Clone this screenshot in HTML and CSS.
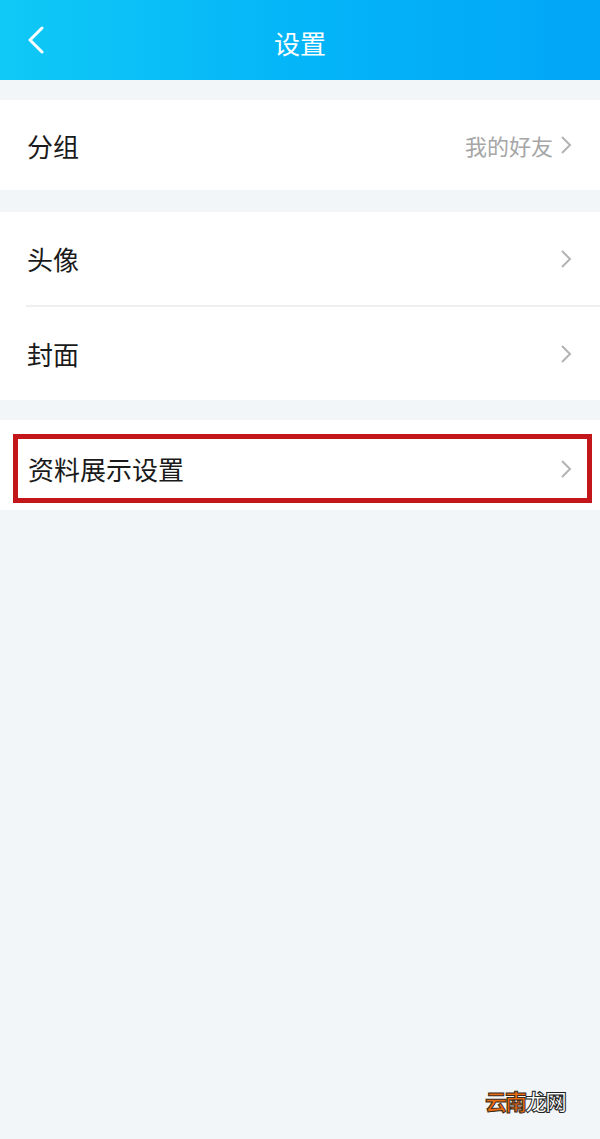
FILE: index.html
```html
<!DOCTYPE html>
<html lang="zh-CN">
<head>
    <meta charset="UTF-8">
    <meta name="viewport" content="width=device-width, initial-scale=1.0">
    <title>设置</title>
    <link rel="stylesheet" href="styles.css">
</head>
<body>
    <!-- 顶部导航 -->
    <header class="nav-bar">
        <span class="nav-back">
            <svg width="18" height="28" viewBox="0 0 18 28">
                <polyline points="15,2 3,14 15,26" fill="none" stroke="#fff" stroke-width="3" stroke-linecap="round" stroke-linejoin="round"/>
            </svg>
        </span>
        <h1 class="nav-title">设置</h1>
    </header>

    <!-- 分组 -->
    <section class="group group-first">
        <div class="row">
            <span class="row-label">分组</span>
            <span class="row-value">我的好友</span>
            <span class="row-arrow"><svg width="12" height="18" viewBox="0 0 12 18"><polyline points="2,1 10,9 2,17" fill="none" stroke="#b3b3b3" stroke-width="2"/></svg></span>
        </div>
    </section>

    <!-- 头像 / 封面 -->
    <section class="group">
        <div class="row row-tall">
            <span class="row-label">头像</span>
            <span class="row-arrow"><svg width="12" height="18" viewBox="0 0 12 18"><polyline points="2,1 10,9 2,17" fill="none" stroke="#b3b3b3" stroke-width="2"/></svg></span>
        </div>
        <div class="divider"></div>
        <div class="row row-tall">
            <span class="row-label">封面</span>
            <span class="row-arrow"><svg width="12" height="18" viewBox="0 0 12 18"><polyline points="2,1 10,9 2,17" fill="none" stroke="#b3b3b3" stroke-width="2"/></svg></span>
        </div>
    </section>

    <!-- 资料展示设置（红框标注） -->
    <section class="group group-marked">
        <div class="highlight">
            <span class="row-label">资料展示设置</span>
            <span class="row-arrow"><svg width="12" height="18" viewBox="0 0 12 18"><polyline points="2,1 10,9 2,17" fill="none" stroke="#b3b3b3" stroke-width="2"/></svg></span>
        </div>
    </section>

    <div class="watermark"><span class="wm-orange">云南</span><span class="wm-white">龙网</span></div>
</body>
</html>
```

FILE: styles.css
```css
/* 全局 */
body {
    margin: 0;
    padding: 0;
    height: 1139px;
    background-color: #f3f6f8;
    font-family: "Noto Sans CJK SC", "Noto Sans", sans-serif;
    position: relative;
    overflow: hidden;
}

/* 顶部导航 */
.nav-bar {
    height: 80px;
    background: linear-gradient(90deg, #10c9f6 0%, #04b5f8 50%, #02a6f7 100%);
    display: flex;
    align-items: center;
    justify-content: center;
    position: relative;
}

.nav-back {
    position: absolute;
    left: 27px;
    top: 26px;
    display: flex;
}

.nav-title {
    margin: 0;
    margin-top: 4px;
    font-size: 26px;
    font-weight: normal;
    color: #fff;
}

/* 分组列表 */
.group {
    background-color: #fff;
    margin-top: 22px;
}

.group-first {
    margin-top: 20px;
}

.row {
    height: 90px;
    display: flex;
    align-items: center;
    padding: 0 28px 0 27px;
}

.row-tall {
    height: 93px;
}

.row-label {
    flex: 1;
    font-size: 26px;
    color: #1a1a1a;
}

.row-value {
    font-size: 22px;
    color: #a6a6a6;
    margin-right: 7px;
}

.row-arrow {
    display: flex;
}

.divider {
    height: 2px;
    margin-left: 26px;
    background-color: #eeeff1;
}

/* 红框标注 */
.group-marked {
    margin-top: 20px;
    padding: 14px 8px 7px 13px;
}

.highlight {
    height: 59px;
    border: 5px solid #c2161a;
    display: flex;
    align-items: center;
    padding: 0 15px 0 10px;
}

/* 水印 */
.watermark {
    position: absolute;
    right: 35px;
    bottom: 23px;
    font-size: 22px;
    font-weight: bold;
    letter-spacing: -2px;
}

.wm-orange {
    color: #ea6c12;
    -webkit-text-stroke: 1px #3a2a20;
}

.wm-white {
    color: #fff;
    -webkit-text-stroke: 1px #222;
}
```
